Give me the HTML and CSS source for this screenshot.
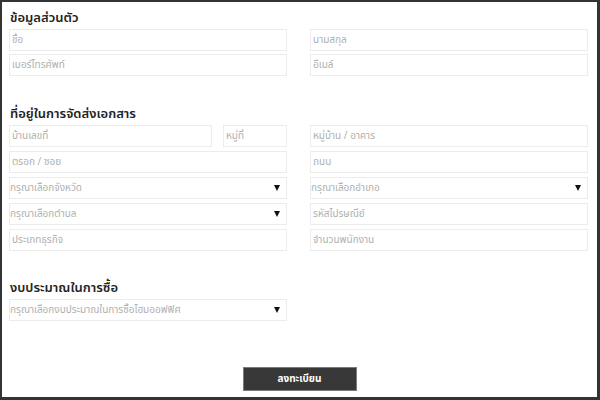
FILE: index.html
```html
<!DOCTYPE html>
<html lang="th">
<head>
<meta charset="utf-8">
<link rel="stylesheet" href="styles.css">
</head>
<body>
<div class="frame">
  <h2 class="heading">ข้อมูลส่วนตัว</h2>
  <div class="grid g1">
    <input class="field" placeholder="ชื่อ">
    <input class="field" placeholder="นามสกุล">
    <input class="field" placeholder="เบอร์โทรศัพท์">
    <input class="field" placeholder="อีเมล์">
  </div>

  <h2 class="heading h2">ที่อยู่ในการจัดส่งเอกสาร</h2>
  <div class="grid g2">
    <div class="pair">
      <input class="field" placeholder="บ้านเลขที่">
      <input class="field" placeholder="หมู่ที่">
    </div>
    <input class="field" placeholder="หมู่บ้าน / อาคาร">
    <input class="field" placeholder="ตรอก / ซอย">
    <input class="field" placeholder="ถนน">
    <div class="sel"><select class="field"><option>กรุณาเลือกจังหวัด</option></select></div>
    <div class="sel"><select class="field"><option>กรุณาเลือกอำเภอ</option></select></div>
    <div class="sel"><select class="field"><option>กรุณาเลือกตำบล</option></select></div>
    <input class="field" placeholder="รหัสไปรษณีย์">
    <input class="field" placeholder="ประเภทธุรกิจ">
    <input class="field" placeholder="จำนวนพนักงาน">
  </div>

  <h2 class="heading h3">งบประมาณในการซื้อ</h2>
  <div class="grid g3">
    <div class="sel"><select class="field"><option>กรุณาเลือกงบประมาณในการซื้อโฮมออฟฟิศ</option></select></div>
  </div>

  <div class="actions">
    <button class="submit">ลงทะเบียน</button>
  </div>
</div>
</body>
</html>
```

FILE: styles.css
```css
html, body {
  margin: 0;
  padding: 0;
  background: #fff;
}
body {
  font-family: Tahoma, "Noto Sans Thai", "Loma", "Garuda", "Leelawadee UI", "DejaVu Sans", sans-serif;
}
.frame {
  box-sizing: border-box;
  width: 600px;
  height: 400px;
  border-style: solid;
  border-color: #333;
  border-width: 2px 3px 3px 2px;
  padding: 6px 9px 0 7px;
  background: #fff;
  overflow: hidden;
}
.heading {
  margin: 0 0 1px 1px;
  height: 20px;
  line-height: 20px;
  font-size: 13px;
  font-weight: 600;
  color: #222;
}
.h2 { margin-top: 28px; }
.h3 { margin-top: 27px; }
.grid {
  display: grid;
  grid-template-columns: 278px 278px;
  column-gap: 23px;
  row-gap: 4px;
}
.g1 { row-gap: 3px; }
.pair {
  display: grid;
  grid-template-columns: 203px 64px;
  column-gap: 11px;
}
.field {
  display: block;
  box-sizing: border-box;
  width: 100%;
  height: 22px;
  line-height: 20px;
  margin: 0;
  border: 1px solid #ececec;
  border-radius: 0;
  background: #fff;
  padding: 0 6px 0 2px;
  font-family: inherit;
  font-size: 10px;
  color: #b0b0b0;
  outline: none;
  -webkit-appearance: none;
  appearance: none;
}
.field::placeholder {
  color: #b0b0b0;
}
select.field {
  padding-left: 0;
}
.sel {
  position: relative;
  height: 22px;
}
.sel::after {
  content: "";
  position: absolute;
  right: 7px;
  top: 8px;
  width: 0;
  height: 0;
  border-left: 3px solid transparent;
  border-right: 3px solid transparent;
  border-top: 6px solid #111;
  pointer-events: none;
}
.actions {
  display: flex;
  justify-content: center;
  margin-top: 46px;
  padding-left: 2px;
}
.submit {
  display: block;
  box-sizing: border-box;
  width: 114px;
  height: 24px;
  background: #383838;
  border: 1px solid #7a7a7a;
  color: #fff;
  font-family: inherit;
  font-weight: bold;
  font-size: 10px;
  padding: 0;
}
```
